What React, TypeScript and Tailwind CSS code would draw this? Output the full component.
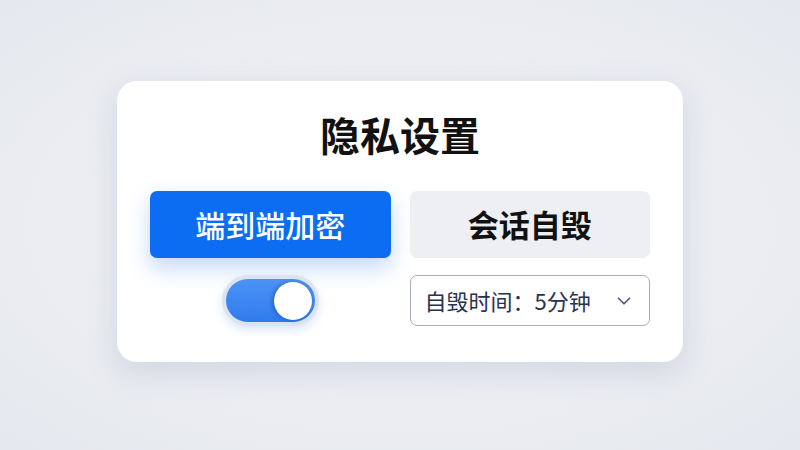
import { ChevronDown } from "lucide-react";

const font = { fontFamily: '"Noto Sans CJK SC", "Noto Sans", sans-serif' };

export default function App() {
  return (
    <div
      className="flex h-[450px] w-[800px] items-center justify-center bg-[radial-gradient(ellipse_at_center,#f3f4f8_0%,#e5e8ee_100%)] pb-[7px]"
      style={font}
    >
      <div className="w-[566px] rounded-[20px] bg-white px-[33px] pb-[36px] pt-[33px] shadow-[0_10px_30px_rgba(120,130,160,0.22)]">
        <h1 className="text-center text-[40px] font-bold leading-[40px] text-[#111]">隐私设置</h1>

        <div className="mt-[37px] grid grid-cols-2 gap-x-[19px] gap-y-[17px]">
          <button className="flex h-[67px] items-center justify-center rounded-[7px] bg-[#0c6cf2] text-[30px] font-medium text-white shadow-[0_10px_22px_rgba(40,120,240,0.28)]">
            端到端加密
          </button>
          <button className="flex h-[67px] items-center justify-center rounded-[7px] bg-[#eeeff3] text-[31px] font-bold text-[#111]">
            会话自毁
          </button>

          <div className="flex h-[51px] items-center justify-center">
            <div className="rounded-full bg-[#dde4f1] p-[4px] shadow-[0_4px_10px_rgba(60,110,220,0.18)]">
              <div className="flex h-[43px] w-[89px] items-center justify-end rounded-full bg-[linear-gradient(180deg,#4e92f5_0%,#2f7bef_100%)] px-[3px]">
                <div className="h-[38px] w-[38px] rounded-full bg-white shadow-[-2px_0_4px_rgba(0,40,120,0.35)]" />
              </div>
            </div>
          </div>

          <div className="flex h-[51px] items-center justify-between rounded-[7px] border border-[#a8adbd] bg-white pl-[14px] pr-[14px]">
            <span className="text-[22px] text-[#283250]">自毁时间：5分钟</span>
            <ChevronDown className="h-[22px] w-[22px] text-[#4a5573]" strokeWidth={1.8} />
          </div>
        </div>
      </div>
    </div>
  );
}
